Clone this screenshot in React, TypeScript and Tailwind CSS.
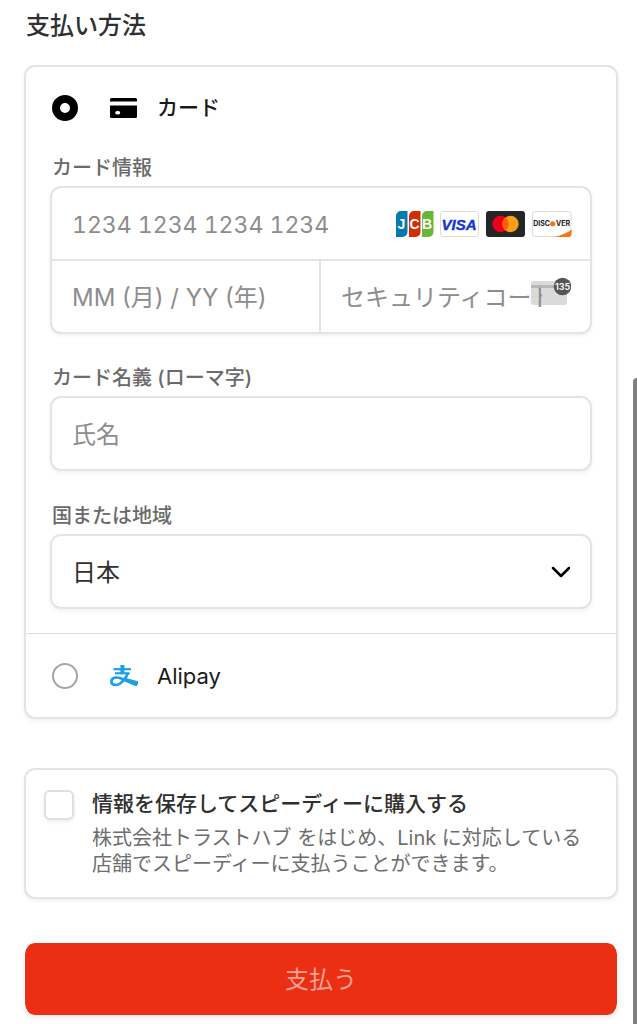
import React, { useState } from 'react';

const inputBase =
  'block h-[71px] w-full min-w-0 bg-transparent px-5 pt-0.5 text-[#303030] placeholder:text-[#8d8d8d] outline-none';

const fieldBox = 'rounded-[11px] border-2 border-[#e4e4e4] bg-white shadow-[0_2px_4px_rgba(0,0,0,0.06)]';

const labelText = 'mb-1 block pl-0.5 text-xl leading-7 font-medium text-[#6a6a6a]';

const radioBase = 'm-0 size-[26px] shrink-0 appearance-none rounded-full bg-white';

const CardIcon: React.FC = () => (
  <svg className="h-5 w-[27px] shrink-0" viewBox="0 0 27 20" aria-hidden="true">
    <path d="M1.500 0h24A1.500 1.500 0 0 1 27 1.500V3.500H0V1.500A1.500 1.500 0 0 1 1.500 0Z" fill="#000" />
    <path
      fillRule="evenodd"
      d="M0 7.500h27v11a1.500 1.500 0 0 1-1.500 1.500h-24a1.500 1.500 0 0 1-1.500-1.500v-11ZM7 13a1.800 1.800 0 0 0 0 3.600h1.400a1.800 1.800 0 0 0 0-3.600H7Z"
      fill="#000"
    />
  </svg>
);

const AlipayIcon: React.FC = () => (
  <svg className="h-[22px] w-7 shrink-0" viewBox="0 0 28 22" fill="none" stroke="#1c9fe5" aria-hidden="true">
    <path d="M3.500 4.200H21" strokeWidth="2.200" />
    <path d="M12.400 0V8.500" strokeWidth="4" />
    <path d="M5 8.300H19.600" strokeWidth="2.200" />
    <path
      d="M17.800 8.300C16.500 12 14 15.500 10.500 18.200C7 20.800 1.400 20.800 1.400 16.500C1.400 12.400 6.500 11.800 10.500 13.200C15 14.700 19 16.900 26 18.600"
      strokeWidth="2.700"
    />
    <path d="M14 12.400L28 16.200V19L26.500 21.200C22 20 18 18 13 15.500Z" fill="#1c9fe5" stroke="none" />
  </svg>
);

const JcbLogo: React.FC = () => (
  <svg className="h-[26px] w-[38px]" viewBox="0 0 38 26" role="img" aria-label="JCB">
    <path d="M5 0h6.500v21a5 5 0 0 1-5 5H0V5a5 5 0 0 1 5-5Z" fill="#047ab1" />
    <path d="M18 0h6.500v21a5 5 0 0 1-5 5H13V5a5 5 0 0 1 5-5Z" fill="#d42d06" />
    <path d="M31 0h6.500v21a5 5 0 0 1-5 5H26V5a5 5 0 0 1 5-5Z" fill="#67b637" />
    <g fill="#fff" fontFamily="Liberation Sans" fontWeight="700" fontSize="14" textAnchor="middle">
      <text x="5.500" y="18">J</text>
      <text x="18.500" y="18">C</text>
      <text x="31" y="18">B</text>
    </g>
  </svg>
);

const VisaLogo: React.FC = () => (
  <svg className="h-[26px] w-10" viewBox="0 0 40 26" role="img" aria-label="Visa">
    <rect x="0.500" y="0.500" width="38" height="25" rx="2.500" fill="#fff" stroke="#dcdcdc" />
    <text
      x="19"
      y="18.500"
      fill="#1434cb"
      stroke="#1434cb"
      strokeWidth="0.400"
      fontFamily="Liberation Sans"
      fontWeight="700"
      fontStyle="italic"
      fontSize="15"
      textAnchor="middle"
    >
      VISA
    </text>
  </svg>
);

const MastercardLogo: React.FC = () => (
  <svg className="h-[26px] w-10" viewBox="0 0 40 26" aria-hidden="true">
    <rect width="39" height="26" rx="3" fill="#252525" />
    <circle cx="14.500" cy="13" r="8.200" fill="#eb001b" />
    <circle cx="24.500" cy="13" r="8.200" fill="#f79e1b" />
    <path d="M19.500 6.500a8.200 8.200 0 0 1 0 13a8.200 8.200 0 0 1 0-13Z" fill="#ff5f00" />
  </svg>
);

const DiscoverLogo: React.FC = () => (
  <svg className="h-[26px] w-10" viewBox="0 0 40 26" role="img" aria-label="Discover">
    <rect x="0.500" y="0.500" width="38.500" height="25" rx="2.500" fill="#fff" stroke="#dcdcdc" />
    <path d="M22 26C29 24.500 35 22 39.500 18.500V23a3 3 0 0 1-3 3Z" fill="#f27712" />
    <g fill="#202020" fontFamily="Inter" fontWeight="700" fontSize="7">
      <text x="1.200" y="15.300">DISC</text>
      <text x="38" y="15.300" textAnchor="end">VER</text>
    </g>
    <circle cx="20.700" cy="12.800" r="2.600" fill="#f27712" />
  </svg>
);

const CvcIcon: React.FC = () => (
  <svg className="h-7 w-10" viewBox="0 0 40 28" aria-hidden="true">
    <rect y="4" width="36" height="24" rx="2.500" fill="#dadada" />
    <rect y="8" width="36" height="3" fill="#b8b8b8" />
    <circle cx="31.500" cy="9.500" r="8.800" fill="#555" />
    <text x="31.500" y="13.300" fill="#fff" fontFamily="Inter" fontWeight="600" fontSize="9" textAnchor="middle">
      135
    </text>
  </svg>
);

const App: React.FC = () => {
  const [method, setMethod] = useState('card');

  return (
    <main
      lang="ja"
      className="relative min-h-screen bg-white pt-2.5 pr-[19px] pb-[9px] pl-6 font-[Inter,'Noto_Sans_CJK_JP',sans-serif] text-[#303030]"
    >
      <h2 className="pl-0.5 text-2xl leading-8 font-medium">支払い方法</h2>

      <form onSubmit={(e) => e.preventDefault()}>
        {/* Payment methods */}
        <section className={`mt-[23px] ${fieldBox}`}>
          <label className="flex h-[81px] items-center px-[26px]">
            <input
              type="radio"
              name="method"
              value="card"
              checked={method === 'card'}
              onChange={() => setMethod('card')}
              className={`${radioBase} border-2 border-[#a5a5a5] checked:border-8 checked:border-black`}
            />
            <span className="mr-5 ml-8 flex"><CardIcon /></span>
            <span className="text-[21px] leading-8 font-medium text-[#1a1a1a]">カード</span>
          </label>

          <div className="px-6 pt-1.5 pb-6">
            <label htmlFor="number" className={labelText}>カード情報</label>
            <div className={fieldBox}>
              <div className="flex items-center border-b-2 border-[#e4e4e4] pr-[18px]">
                <input
                  id="number"
                  inputMode="numeric"
                  placeholder="1234 1234 1234 1234"
                  className={`text-[23px] tabular-nums ${inputBase}`}
                />
                <div className="flex shrink-0 gap-1.5">
                  <JcbLogo />
                  <VisaLogo />
                  <MastercardLogo />
                  <DiscoverLogo />
                </div>
              </div>
              <div className="grid grid-cols-2">
                <div className="border-r-2 border-[#e4e4e4]">
                  <input aria-label="有効期限" placeholder="MM (月) / YY (年)" className={`text-2xl ${inputBase}`} />
                </div>
                <div className="relative pr-7">
                  <div className="absolute inset-y-0 right-[19px] flex items-center pb-3">
                    <CvcIcon />
                  </div>
                  <input
                    aria-label="セキュリティコード"
                    placeholder="セキュリティコード"
                    className={`relative text-2xl ${inputBase}`}
                  />
                </div>
              </div>
            </div>

            <label htmlFor="name" className={`mt-[30px] ${labelText}`}>カード名義 (ローマ字)</label>
            <div className={fieldBox}>
              <input id="name" placeholder="氏名" className={`text-2xl ${inputBase}`} />
            </div>

            <label htmlFor="country" className={`mt-[31px] ${labelText}`}>国または地域</label>
            <div className={`relative ${fieldBox}`}>
              <select id="country" className={`appearance-none text-2xl ${inputBase}`}>
                <option>日本</option>
              </select>
              <svg
                className="pointer-events-none absolute inset-y-0 right-5 my-auto h-3 w-5"
                viewBox="0 0 20 12"
                fill="none"
                stroke="#000"
                strokeWidth="2.500"
                strokeLinecap="round"
                strokeLinejoin="round"
                aria-hidden="true"
              >
                <path d="M3 2l8 8 8-8" />
              </svg>
            </div>
          </div>

          <label className="flex h-[84px] items-center border-t border-[#dedede] px-[26px]">
            <input
              type="radio"
              name="method"
              value="alipay"
              checked={method === 'alipay'}
              onChange={() => setMethod('alipay')}
              className={`${radioBase} border-2 border-[#a5a5a5] checked:border-8 checked:border-black`}
            />
            <span className="mr-[19px] ml-8 flex"><AlipayIcon /></span>
            <span className="text-[22px] leading-8 text-[#1a1a1a]">Alipay</span>
          </label>
        </section>

        {/* Save details */}
        <section className={`mt-[49px] flex items-start py-5 pr-4 pl-[18px] ${fieldBox}`}>
          <input
            id="save"
            type="checkbox"
            className="mr-[18px] size-[30px] shrink-0 appearance-none rounded-md border-2 border-[#e0e0e0] bg-white shadow-[0_2px_4px_rgba(0,0,0,0.07)] checked:bg-black"
          />
          <div>
            <label htmlFor="save" className="block text-[21px] leading-7 font-medium">
              情報を保存してスピーディーに購入する
            </label>
            <p className="mt-[7px] text-xl leading-[26px] text-[#6d6d6d]">
              株式会社トラストハブ をはじめ、Link に対応している店舗でスピーディーに支払うことができます。
            </p>
          </div>
        </section>

        <button
          type="submit"
          className="mt-11 block h-[72px] w-full rounded-[11px] border-x border-white bg-[#eb2f12] bg-clip-padding pt-0.5 text-2xl text-[#f8a297] shadow-[0_3px_5px_rgba(0,0,0,0.08)]"
        >
          支払う
        </button>
      </form>

      {/* Scroll indicator */}
      <div className="absolute top-[378px] right-0 bottom-0 w-1 rounded-tl-sm bg-[#7f7f7f]" />
    </main>
  );
};

export default App;
